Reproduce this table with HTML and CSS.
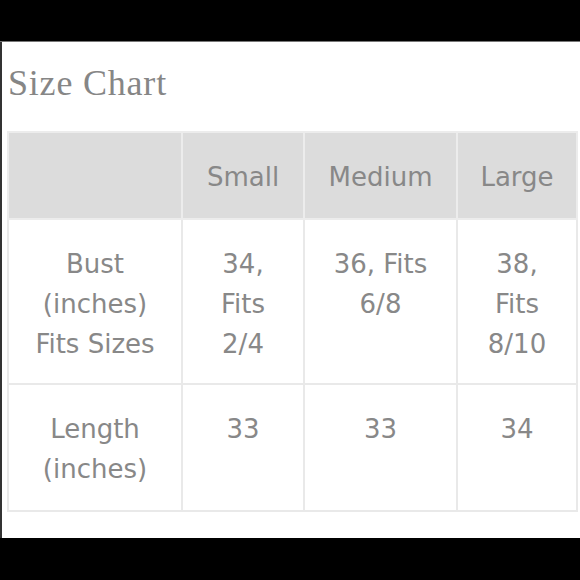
FILE: index.html
```html
<!DOCTYPE html>
<html>
<head>
<meta charset="utf-8">
<link rel="stylesheet" href="styles.css">
</head>
<body>
<div class="topbar"></div>
<div class="page">
  <h1 class="title">Size Chart</h1>
  <table class="chart">
    <colgroup>
      <col class="c1"><col class="c2"><col class="c3"><col class="c4">
    </colgroup>
    <tr class="head">
      <th></th><th>Small</th><th>Medium</th><th>Large</th>
    </tr>
    <tr class="bust">
      <td>Bust (inches) Fits Sizes</td><td>34, Fits 2/4</td><td>36, Fits 6/8</td><td>38, Fits 8/10</td>
    </tr>
    <tr class="length">
      <td>Length (inches)</td><td>33</td><td>33</td><td>34</td>
    </tr>
  </table>
</div>
<div class="bottombar"></div>
</body>
</html>
```
FILE: styles.css
```css
html, body {
  margin: 0;
  padding: 0;
  background: #000;
  width: 580px;
  height: 580px;
  overflow: hidden;
}
.topbar {
  height: 41px;
  background: #000;
  border-bottom: 1px solid #777;
}
.page {
  height: 496px;
  background: #fff;
  border-left: 2px solid #333;
  box-sizing: border-box;
  padding: 21px 0 0 5px;
}
.title {
  margin: 0 0 27px 1px;
  font-family: "Liberation Serif", "Times New Roman", serif;
  font-weight: normal;
  font-size: 36px;
  line-height: 41px;
  letter-spacing: 0.8px;
  color: #868686;
}
.chart {
  border-collapse: collapse;
  table-layout: fixed;
  width: 569px;
  border: 2px solid #e9e9e9;
  font-family: "DejaVu Sans", Verdana, sans-serif;
  font-size: 26px;
  color: #888;
}
.c1 { width: 174px; }
.c2 { width: 122px; }
.c3 { width: 153px; }
.c4 { width: 120px; }
.chart th, .chart td {
  border: 2px solid #e9e9e9;
  text-align: center;
  vertical-align: top;
  font-weight: normal;
  line-height: 40px;
  padding: 24px 14px 0;
}
.chart th {
  background: #dcdcdc;
  border-color: #ececec;
}
.head { height: 87px; }
.bust { height: 165px; }
.length { height: 127px; }
.bottombar {
  height: 43px;
  background: #000;
}
```
